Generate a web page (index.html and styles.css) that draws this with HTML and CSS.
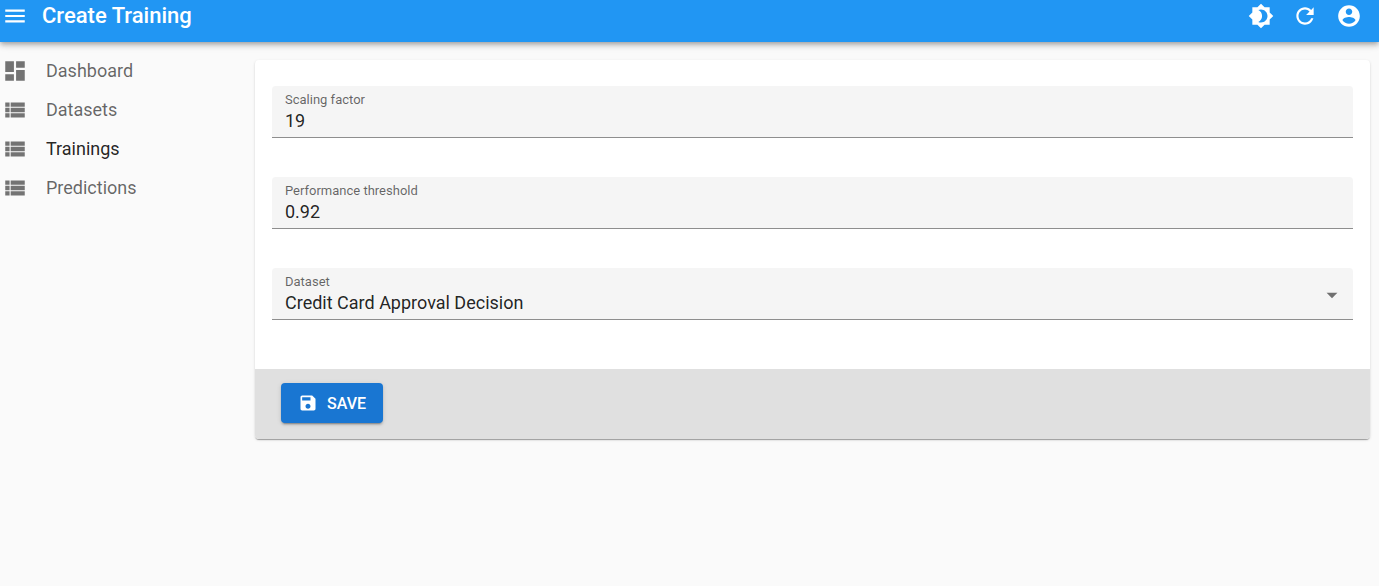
FILE: index.html
```html
<!DOCTYPE html>
<html lang="en">

<head>
    <meta charset="UTF-8">
    <meta name="viewport" content="width=device-width, initial-scale=1.0">
    <title>Create Training</title>
    <link rel="stylesheet" href="styles.css">
</head>

<body>
    <header class="appbar">
        <button type="button" class="icon-button" aria-label="Close menu">
            <svg class="icon" viewBox="0 0 24 24"><path d="M3 18h18v-2H3v2zm0-5h18v-2H3v2zm0-7v2h18V6H3z"/></svg>
        </button>
        <h1 class="title">Create Training</h1>
        <div class="actions">
            <button type="button" class="icon-button" aria-label="Toggle theme">
                <svg class="icon" viewBox="0 0 24 24"><path d="M20 8.69V4h-4.69L12 .69 8.69 4H4v4.69L.69 12 4 15.31V20h4.69L12 23.31 15.31 20H20v-4.69L23.31 12 20 8.69zM12 18c-.89 0-1.74-.2-2.5-.55C11.56 16.5 13 14.42 13 12s-1.44-4.5-3.5-5.45C10.26 6.2 11.11 6 12 6c3.31 0 6 2.69 6 6s-2.69 6-6 6z"/></svg>
            </button>
            <button type="button" class="icon-button" aria-label="Refresh">
                <svg class="icon" viewBox="0 0 24 24"><path d="M17.65 6.35C16.2 4.9 14.21 4 12 4c-4.42 0-7.99 3.58-7.99 8s3.57 8 7.99 8c3.73 0 6.84-2.55 7.73-6h-2.08c-.82 2.33-3.04 4-5.65 4-3.31 0-6-2.69-6-6s2.69-6 6-6c1.66 0 3.14.69 4.22 1.78L13 11h7V4l-2.35 2.35z"/></svg>
            </button>
            <button type="button" class="icon-button" aria-label="Profile">
                <svg class="icon" viewBox="0 0 24 24"><path d="M12 2C6.48 2 2 6.48 2 12s4.48 10 10 10 10-4.48 10-10S17.52 2 12 2zm0 3c1.66 0 3 1.34 3 3s-1.34 3-3 3-3-1.34-3-3 1.34-3 3-3zm0 14.2c-2.5 0-4.71-1.28-6-3.22.03-1.99 4-3.08 6-3.08 1.99 0 5.97 1.09 6 3.08-1.29 1.94-3.5 3.22-6 3.22z"/></svg>
            </button>
        </div>
    </header>

    <div class="layout">
        <nav class="menu">
            <a href="#" class="menu-item">
                <svg class="icon" viewBox="0 0 24 24"><path d="M3 13h8V3H3v10zm0 8h8v-6H3v6zm10 0h8V11h-8v10zm0-18v6h8V3h-8z"/></svg>
                Dashboard
            </a>
            <a href="#" class="menu-item">
                <svg class="icon" viewBox="0 0 24 24"><path d="M3 14h4v-4H3v4zm0 5h4v-4H3v4zM3 9h4V5H3v4zm5 5h13v-4H8v4zm0 5h13v-4H8v4zM8 5v4h13V5H8z"/></svg>
                Datasets
            </a>
            <a href="#" class="menu-item active" aria-current="page">
                <svg class="icon" viewBox="0 0 24 24"><path d="M3 14h4v-4H3v4zm0 5h4v-4H3v4zM3 9h4V5H3v4zm5 5h13v-4H8v4zm0 5h13v-4H8v4zM8 5v4h13V5H8z"/></svg>
                Trainings
            </a>
            <a href="#" class="menu-item">
                <svg class="icon" viewBox="0 0 24 24"><path d="M3 14h4v-4H3v4zm0 5h4v-4H3v4zM3 9h4V5H3v4zm5 5h13v-4H8v4zm0 5h13v-4H8v4zM8 5v4h13V5H8z"/></svg>
                Predictions
            </a>
        </nav>

        <main class="content">
            <form class="card">
                <div class="fields">
                    <div class="field">
                        <label for="scaling">Scaling factor</label>
                        <input type="text" id="scaling" name="scaling" value="19">
                    </div>
                    <div class="field">
                        <label for="threshold">Performance threshold</label>
                        <input type="text" id="threshold" name="threshold" value="0.92">
                    </div>
                    <div class="field">
                        <label for="dataset">Dataset</label>
                        <select id="dataset" name="dataset">
                            <option>Credit Card Approval Decision</option>
                        </select>
                        <svg class="icon arrow" viewBox="0 0 24 24"><path d="M7 10l5 5 5-5z"/></svg>
                    </div>
                </div>
                <div class="toolbar">
                    <button type="button" class="save">
                        <svg class="icon" viewBox="0 0 24 24"><path d="M17 3H5c-1.11 0-2 .9-2 2v14c0 1.1.89 2 2 2h14c1.1 0 2-.9 2-2V7l-4-4zm-5 16c-1.66 0-3-1.34-3-3s1.34-3 3-3 3 1.34 3 3-1.34 3-3 3zm3-10H5V5h10v4z"/></svg>
                        SAVE
                    </button>
                </div>
            </form>
        </main>
    </div>
</body>

</html>
```

FILE: styles.css
```css
* {
    box-sizing: border-box;
}

body {
    margin: 0;
    background-color: #fafafa;
    color: rgba(0, 0, 0, 0.87);
    font-family: Roboto, "Liberation Sans", sans-serif;
    font-size: 18px;
}

button, input, select {
    font-family: inherit;
    font-size: inherit;
    color: inherit;
}

.icon {
    display: block;
    flex: none;
    width: 26px;
    height: 26px;
    fill: currentColor;
}

/* top bar */
.appbar {
    position: relative;
    display: flex;
    align-items: center;
    height: 42px;
    padding: 0 17px 10px 2px;
    background-color: #2196f3;
    color: white;
    box-shadow: 0 2px 4px -1px rgba(0, 0, 0, 0.2), 0 4px 5px rgba(0, 0, 0, 0.14), 0 1px 10px rgba(0, 0, 0, 0.12);
}

.icon-button {
    padding: 0;
    border: none;
    background: none;
    cursor: pointer;
}

.title {
    margin: 0 0 0 14px;
    font-size: 22px;
    line-height: 32px;
    font-weight: 500;
}

.actions {
    display: flex;
    gap: 18px;
    margin-left: auto;
}

/* sidebar and page */
.layout {
    display: flex;
}

.menu {
    flex: none;
    width: 255px;
    padding-top: 9px;
}

.menu-item {
    display: flex;
    align-items: center;
    gap: 18px;
    height: 39px;
    padding-left: 2px;
    color: rgba(0, 0, 0, 0.6);
    text-decoration: none;
}

.menu-item .icon {
    color: rgba(0, 0, 0, 0.54);
}

.active {
    color: rgba(0, 0, 0, 0.87);
}

.content {
    flex: 1;
    padding: 18px 9px 18px 0;
}

.card {
    overflow: hidden;
    border-radius: 4px;
    background-color: white;
    box-shadow: 0 2px 1px -1px rgba(0, 0, 0, 0.2), 0 1px 1px rgba(0, 0, 0, 0.14), 0 1px 3px rgba(0, 0, 0, 0.12);
}

.fields {
    display: flex;
    flex-direction: column;
    gap: 39px;
    padding: 26px 17px 49px;
}

.field {
    position: relative;
    height: 52px;
    border-bottom: 1px solid rgba(0, 0, 0, 0.42);
    border-radius: 4px 4px 0 0;
    background-color: #f5f5f5;
}

.field label {
    position: absolute;
    top: 5px;
    left: 13px;
    color: rgba(0, 0, 0, 0.6);
    font-size: 13px;
    line-height: 18px;
    pointer-events: none;
}

.field input, .field select {
    display: block;
    width: 100%;
    height: 100%;
    padding: 22px 13px 4px;
    border: none;
    outline: none;
    background: none;
    appearance: none;
}

.arrow {
    position: absolute;
    top: 14px;
    right: 8px;
    color: rgba(0, 0, 0, 0.54);
    pointer-events: none;
}

/* form footer */
.toolbar {
    padding: 14px 26px 16px;
    background-color: #e0e0e0;
}

.save {
    display: flex;
    align-items: center;
    gap: 9px;
    height: 40px;
    padding: 0 17px;
    border: none;
    border-radius: 4px;
    background-color: #1976d2;
    color: white;
    font-size: 16px;
    font-weight: 500;
    cursor: pointer;
    box-shadow: 0 3px 1px -2px rgba(0, 0, 0, 0.2), 0 2px 2px rgba(0, 0, 0, 0.14), 0 1px 5px rgba(0, 0, 0, 0.12);
}

.save .icon {
    width: 20px;
    height: 20px;
}
```
